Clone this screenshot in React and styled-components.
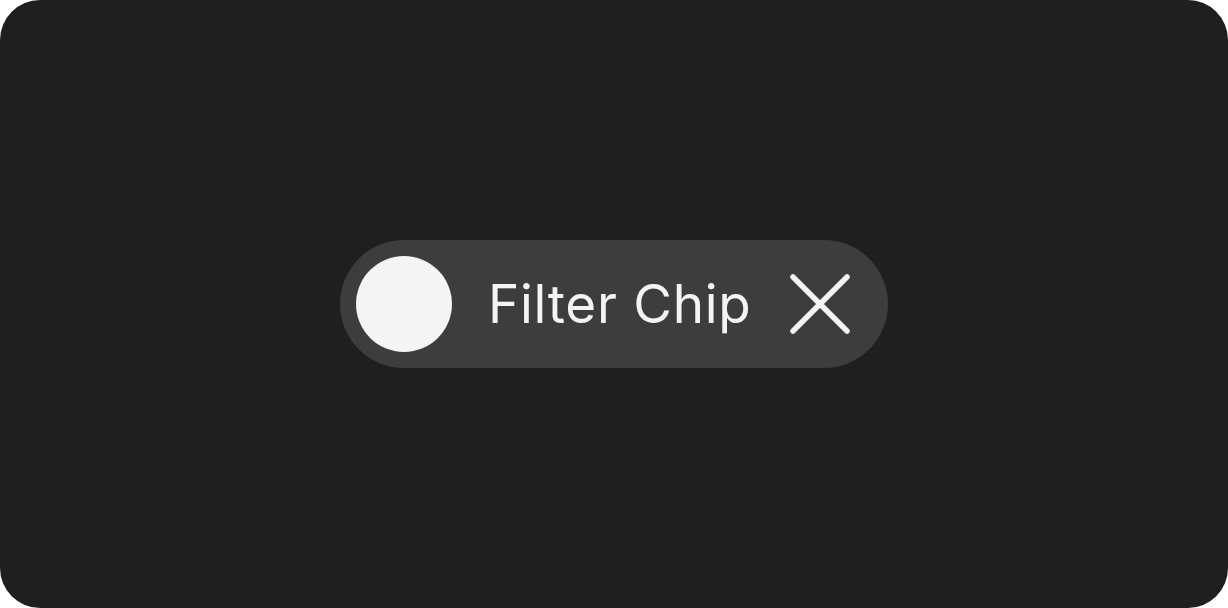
import React from "react";
import styled, { createGlobalStyle } from "styled-components";

const GlobalStyle = createGlobalStyle`
    html, body {
        margin: 0;
        padding: 0;
        background: #ffffff;
    }
`

const StyledCanvas = styled.main`
    align-items: center;
    background-color: #1f1f1f;
    border-radius: 40px;
    box-sizing: border-box;
    display: flex;
    height: 608px;
    justify-content: center;
    width: 1228px;
`

const StyledChip = styled.div`
    align-items: center;
    background-color: #3d3d3d;
    border-radius: 64px;
    box-sizing: border-box;
    display: flex;
    height: 128px;
    padding: 16px 36px 16px 16px;
    width: 548px;
`

const Avatar = styled.span`
    background-color: #f4f4f4;
    border-radius: 50%;
    flex-shrink: 0;
    height: 96px;
    width: 96px;
`

const ChipLabel = styled.span`
    color: #f4f4f4;
    flex: 1;
    font-family: "Inter", "Noto Sans", sans-serif;
    font-size: 53px;
    font-weight: 400;
    letter-spacing: 0.7px;
    margin-left: 36px;
    white-space: nowrap;
`

const CloseButton = styled.button`
    align-items: center;
    background: none;
    border: none;
    cursor: pointer;
    display: flex;
    height: 64px;
    justify-content: center;
    padding: 0;
    width: 64px;
`

const CloseIcon = () => (
    <svg width="64" height="64" viewBox="0 0 64 64" fill="none">
        <path
            d="M5 5L59 59M59 5L5 59"
            stroke="#f4f4f4"
            strokeWidth="5.5"
            strokeLinecap="round"
        />
    </svg>
)

const App = () => {
    return (
        <>
            <GlobalStyle />
            <StyledCanvas>
                <StyledChip>
                    <Avatar />
                    <ChipLabel>Filter Chip</ChipLabel>
                    <CloseButton aria-label="Remove filter">
                        <CloseIcon />
                    </CloseButton>
                </StyledChip>
            </StyledCanvas>
        </>
    );
}

export default App;
